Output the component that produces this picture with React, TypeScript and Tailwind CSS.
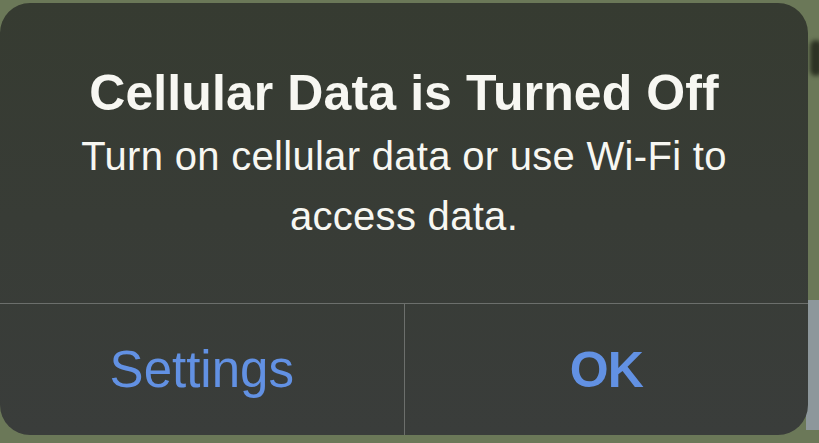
import React from 'react';

const App: React.FC = () => {
  return (
    <div className="w-[819px] h-[443px] bg-[#6b7858] overflow-hidden relative font-['Liberation_Sans',Arial,sans-serif]">
      {/* blurry background bits */}
      <div className="absolute left-[806px] top-[300px] w-[20px] h-[130px] bg-[#8d979b]" />
      <div className="absolute left-[810px] top-[40px] w-[12px] h-[36px] rounded-full bg-[#2d3324] blur-[2px]" />
      <div className="relative mt-[3px] w-[808px] h-[432px] rounded-[30px] overflow-hidden bg-gradient-to-b from-[#363b31] to-[#3a3d3b] flex flex-col">
        <div className="h-[300px] flex flex-col items-center pt-[62px] text-[#f7f7f2]">
          <h1 className="text-[50px] leading-[56px] font-bold tracking-[0.1px] whitespace-nowrap">Cellular Data is Turned Off</h1>
          <p className="mt-[5px] text-[40px] leading-[60px] text-center w-[700px] tracking-[0.3px]">
            Turn on cellular data or use Wi-Fi to access data.
          </p>
        </div>
        <div className="h-px bg-[#6c6f6c]" />
        <div className="flex-1 flex">
          <button className="flex-1 flex justify-center pt-[36px] text-[51px] leading-[60px] text-[#6291e3]">
            Settings
          </button>
          <div className="w-px bg-[#6c6f6c]" />
          <button className="flex-1 flex justify-center pt-[36px] text-[50px] leading-[60px] font-bold tracking-[-1px] text-[#6291e3]">
            OK
          </button>
        </div>
      </div>
    </div>
  );
};

export default App;
